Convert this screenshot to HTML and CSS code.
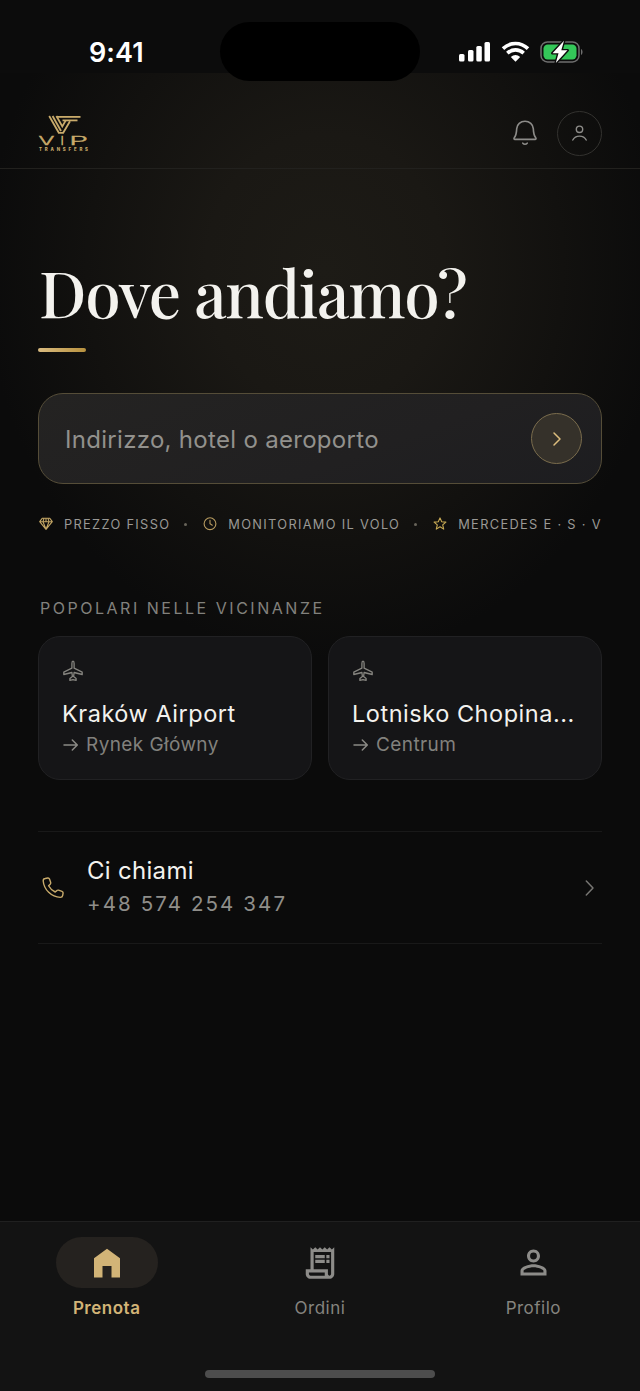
FILE: index.html
```html
<!DOCTYPE html>
<html lang="it">
<head>
<meta charset="utf-8">
<title>VIP Transfers</title>
<link rel="stylesheet" href="styles.css">
</head>
<body>
<div class="app">
  <div class="statusbar">
    <span class="time">9:41</span>
    <div class="island"></div>
    <svg width="126" height="24" viewBox="0 0 126 24">
      <g fill="#fff">
        <rect x="1" y="14" width="5.5" height="7.5" rx="1.5"/>
        <rect x="10" y="10" width="5.5" height="11.5" rx="1.5"/>
        <rect x="18.3" y="6" width="5.5" height="15.5" rx="1.5"/>
        <rect x="26.5" y="2" width="5.5" height="19.5" rx="1.5"/>
      </g>
      <g fill="none" stroke="#fff" stroke-width="3.6">
        <path d="M45 8.6C52.3 1.7 62.7 1.7 70 8.6"/>
        <path d="M49.3 13.2C54.2 8.8 60.8 8.8 65.7 13.2"/>
      </g>
      <path d="M52.8 17C55.8 14.3 59.2 14.3 62.2 17L57.5 21.8Z" fill="#fff"/>
      <rect x="83" y="1.9" width="38" height="20" rx="6.5" fill="none" stroke="#6e6e6e" stroke-width="1.5"/>
      <rect x="85.5" y="4.4" width="33" height="15" rx="4.2" fill="#34c759"/>
      <path d="M123 9v6c2-.7 2-5.3 0-6z" fill="#6e6e6e"/>
      <path d="M106 .8L94.5 13.2h6L97.8 23 109.5 10.3h-6.2z" fill="#fff" stroke="#0c0c0c" stroke-width="2.8" paint-order="stroke" stroke-linejoin="round"/>
    </svg>
  </div>

  <header class="header">
    <svg class="logo" width="52" height="40" viewBox="0 0 52 40">
      <g fill="none" stroke="#c9ab6b" stroke-width="1.8">
        <path d="M11.2 4L20.8 20.8H25.2L32 9.2"/>
        <path d="M14.6 4L23 19"/>
        <path d="M18.4 4L24.3 14.5L27.8 8.4"/>
        <path d="M18.9 4.9H42.5"/>
        <path d="M24.5 8.4H39.5"/>
      </g>
      <g class="wordmark" font-size="11">
        <text transform="translate(.5 33.2) scale(2.15 1)">V</text>
        <text transform="translate(22.8 33.2)">I</text>
        <text transform="translate(31.2 33.2) scale(2.7 1)">P</text>
      </g>
      <text class="wordmark-sub" x="1" y="38.9" font-size="4.4" textLength="49">TRANSFERS</text>
    </svg>
    <div class="header-actions">
      <svg width="26" height="28" viewBox="0 0 26 28" fill="none" stroke="#8d8c89" stroke-width="1.6" stroke-linecap="round" stroke-linejoin="round">
        <path d="M13 2.2C8.4 2.2 5 5.4 4.7 9.6C4.5 15 3.7 17 2.2 18.8C1.7 19.6 2 20.4 3 20.4H23C24 20.4 24.3 19.6 23.8 18.8C22.3 17 21.5 15 21.3 9.6C21 5.4 17.6 2.2 13 2.2Z"/>
        <path d="M10.8 24.2C12 25.6 14 25.6 15.2 24.2"/>
      </svg>
      <div class="avatar">
        <svg width="18" height="18" viewBox="0 0 18 18" fill="none" stroke="#8d8c89" stroke-width="1.4" stroke-linecap="round">
          <circle cx="8.5" cy="5.3" r="3.2"/><path d="M1.8 16C4.3 10.8 12.7 10.8 15.2 16"/>
        </svg>
      </div>
    </div>
  </header>

  <main class="content">
    <h1 class="title">Dove andiamo?</h1>
    <div class="rule"></div>

    <div class="search">
      <span class="placeholder">Indirizzo, hotel o aeroporto</span>
      <div class="go">
        <svg width="14" height="16" viewBox="0 0 14 16" fill="none" stroke="#dcbd7d" stroke-width="1.5" stroke-linecap="round" stroke-linejoin="round"><path d="M4 2l6 6-6 6"/></svg>
      </div>
    </div>

    <div class="perks">
      <svg width="14" height="14" viewBox="0 0 14 14" fill="none" stroke="#c2a564" stroke-width="1.1" stroke-linejoin="round"><path d="M3.2 1.3h7.6l2.5 3.4L7 12.3.7 4.7zM.7 4.7h12.6M5 1.3L4 4.7l3 7.6 3-7.6-1-3.4M7 1.3v3.4"/></svg>
      <span class="perk">PREZZO FISSO</span>
      <i class="dot"></i>
      <svg width="14" height="14" viewBox="0 0 14 14" fill="none" stroke="#b89c60" stroke-width="1.1" stroke-linecap="round"><circle cx="7" cy="6.7" r="5.9"/><path d="M7 3.2V6.7l2.3 1.5"/></svg>
      <span class="perk">MONITORIAMO IL VOLO</span>
      <i class="dot"></i>
      <svg width="14" height="14" viewBox="0 0 14 14" fill="none" stroke="#c9ab55" stroke-width="1.1" stroke-linejoin="round"><path d="M7 .9l1.7 3.9 4.2.3-3.2 2.8 1 4.2L7 9.8l-3.7 2.3 1-4.2L1.1 5.1l4.2-.3z"/></svg>
      <span class="perk">MERCEDES E · S · V</span>
    </div>

    <h2 class="section-label">POPOLARI NELLE VICINANZE</h2>
    <div class="cards">
      <div class="card">
        <svg width="22" height="22" viewBox="0 0 22 22" fill="none" stroke="#85847f" stroke-width="1.3" stroke-linejoin="round"><path d="M11 1.2c-.8 0-1.1 1-1.1 2.2V8.2L1.8 12.2v2.3l8.1-2 .5 4-2.5 2v1.9L11 19.6l3.1.8v-1.9l-2.5-2 .5-4 8.1 2v-2.3L12.1 8.2V3.4c0-1.200-.3-2.200-1.100-2.200z"/></svg>
        <div class="card-title">Kraków Airport</div>
        <div class="card-sub"><svg class="arrow" width="18" height="16" viewBox="0 0 18 16"><path d="M2 8h13M10.3 3l5 5-5 5"/></svg><span>Rynek Główny</span></div>
      </div>
      <div class="card">
        <svg width="22" height="22" viewBox="0 0 22 22" fill="none" stroke="#85847f" stroke-width="1.3" stroke-linejoin="round"><path d="M11 1.2c-.8 0-1.1 1-1.1 2.2V8.2L1.8 12.2v2.3l8.1-2 .5 4-2.5 2v1.9L11 19.6l3.1.8v-1.9l-2.5-2 .5-4 8.1 2v-2.3L12.1 8.2V3.4c0-1.200-.3-2.200-1.100-2.200z"/></svg>
        <div class="card-title">Lotnisko Chopina...</div>
        <div class="card-sub"><svg class="arrow" width="18" height="16" viewBox="0 0 18 16"><path d="M2 8h13M10.3 3l5 5-5 5"/></svg><span>Centrum</span></div>
      </div>
    </div>

    <div class="call">
      <svg width="24" height="24" viewBox="0 0 24 24" fill="none" stroke="#c9ab6b" stroke-width="1.4" stroke-linejoin="round"><path d="M4.2 2.5L6.8 2C7.7 1.9 8.2 2.3 8.5 3.1L9.7 6.5C9.9 7.2 9.7 7.7 9.2 8.2L7.6 9.8C9 12.5 11.3 14.6 14.2 16L15.8 14.6C16.3 14.1 16.9 14 17.5 14.2L21 15.3C21.8 15.6 22.2 16.2 22.1 17L21.7 19.4C21.5 20.6 20.6 21.4 19.4 21.4C10.3 20.9 3 13.8 2.2 5C2.1 3.7 2.9 2.7 4.2 2.5Z"/></svg>
      <div class="call-text">
        <div class="call-title">Ci chiami</div>
        <div class="call-number">+48 574 254 347</div>
      </div>
      <svg width="12" height="18" viewBox="0 0 12 18" fill="none" stroke="#777673" stroke-width="1.5" stroke-linecap="round" stroke-linejoin="round"><path d="M2.3 2l6.700 7-6.700 7"/></svg>
    </div>
  </main>

  <nav class="tabs">
    <div class="tab tab-active">
      <div class="tab-icon"><svg width="40" height="40" viewBox="0 0 24 24" fill="#d2b477"><path d="M4.2 20.7V9.2L12 3.4l7.8 5.8v11.5h-5.1v-6.9H9.3v6.9z"/></svg></div>
      <span class="tab-label">Prenota</span>
    </div>
    <div class="tab">
      <div class="tab-icon"><svg width="38" height="38" viewBox="0 0 24 24" fill="#8d8c89"><path d="M19.5 3.5 18 2l-1.500 1.500L15 2l-1.500 1.500L12 2l-1.500 1.500L9 2 7.500 3.500 6 2v14H3v3c0 1.660 1.340 3 3 3h12c1.660 0 3-1.340 3-3V2zM15 20H6c-.55 0-1-.45-1-1v-1h10zm4-1c0 .55-.45 1-1 1s-1-.45-1-1v-3H8V5h11zM9 7h6v2H9zM16 7h2v2h-2zM9 10h6v2H9zM16 10h2v2h-2z"/></svg></div>
      <span class="tab-label">Ordini</span>
    </div>
    <div class="tab">
      <div class="tab-icon"><svg width="39" height="39" viewBox="0 0 24 24" fill="#8d8c89"><path d="M12 5.9a2.100 2.100 0 110 4.200 2.100 2.100 0 010-4.200m0 9c2.970 0 6.100 1.460 6.100 2.100v1.100H5.900V17c0-.64 3.130-2.100 6.100-2.100M12 4C9.790 4 8 5.790 8 8s1.790 4 4 4 4-1.790 4-4-1.790-4-4-4zm0 9c-2.670 0-8 1.340-8 4v3h16v-3c0-2.660-5.330-4-8-4z"/></svg></div>
      <span class="tab-label">Profilo</span>
    </div>
    <div class="home-indicator"></div>
  </nav>
</div>
</body>
</html>
```
FILE: styles.css
```css
* { box-sizing: border-box; margin: 0; padding: 0; }
body { background: #0b0b0b; font-family: Inter, "Noto Sans", sans-serif; color: #f3f2ee; }
svg { display: block; flex: none; }
.app {
  width: 640px; height: 1391px; display: flex; flex-direction: column; overflow: hidden;
  background: radial-gradient(ellipse 340px 390px at 325px 270px, #1d1b16 0%, #1a1814 35%, #12110f 70%, #0b0b0b 100%) #0b0b0b;
}
.statusbar { height: 73px; flex: none; background: #0c0c0c; position: relative; padding: 31px 56px 0 89px; display: flex; justify-content: space-between; align-items: center; }
.time { font-size: 27px; font-weight: 600; line-height: 42px; letter-spacing: 0.1px; color: #fff; padding-top: 1px; }
.island { position: absolute; left: 220px; top: 22px; width: 200px; height: 59px; border-radius: 30px; background: #000; }
.header { height: 96px; flex: none; border-bottom: 1px solid #22211e; padding: 25px 38px 0; display: flex; align-items: center; justify-content: space-between; }
.logo { margin-bottom: 3px; }
.wordmark text { font-family: Inter, sans-serif; font-weight: 300; fill: #c9ab6b; stroke: #c9ab6b; stroke-width: 0.6px; vector-effect: non-scaling-stroke; }
.wordmark-sub { font-family: Inter, sans-serif; font-weight: 800; fill: #c9ab6b; }
.header-actions { display: flex; align-items: center; gap: 19px; }
.avatar { width: 45px; height: 45px; border: 1px solid #33322f; border-radius: 50%; display: flex; align-items: center; justify-content: center; }
.content { flex: 1; padding: 85px 38px 0; display: flex; flex-direction: column; }
.title { font-family: "Playfair Display", "Liberation Serif", serif; font-size: 64px; line-height: 76px; font-weight: 500; letter-spacing: -1.2px; padding-left: 1px; white-space: nowrap; }
.rule { width: 48px; height: 4px; margin-top: 18px; border-radius: 2px; background: linear-gradient(90deg, #d9bb80, #b8923f); }
.search { height: 91px; margin-top: 41px; flex: none; border: 1px solid #554d38; border-radius: 25px; background: linear-gradient(160deg, #242322, #212021 60%, #1d1d20); display: flex; align-items: center; justify-content: space-between; padding: 0 19px 0 26px; }
.placeholder { font-size: 24px; color: #92918d; letter-spacing: 0.3px; padding-top: 2px; }
.go { width: 51px; height: 51px; border-radius: 50%; border: 1px solid #7b6d4d; background: #35312a; display: flex; align-items: center; justify-content: center; }
.perks { display: flex; align-items: center; height: 20px; margin-top: 30px; padding-left: 1px; white-space: nowrap; }
.perk { font-size: 12.8px; line-height: 20px; letter-spacing: 1.33px; color: #9a9995; margin-left: 11px; padding-top: 1px; }
.dot { flex: none; width: 3px; height: 3px; border-radius: 50%; background: #68645a; margin: 0 16px 0 14px; }
.section-label { font-size: 16px; font-weight: 400; line-height: 20px; letter-spacing: 2.52px; color: #82817d; margin-top: 64px; padding-left: 2px; }
.cards { display: grid; grid-template-columns: 1fr 1fr; gap: 16px; margin-top: 18px; }
.card { height: 144px; border: 1px solid #212123; border-radius: 22px; background: #151517; padding: 23px 22px 0 23px; }
.card-title { font-size: 23.5px; line-height: 30px; margin-top: 17px; letter-spacing: 0.53px; white-space: nowrap; }
.card-sub { display: flex; align-items: center; gap: 6px; font-size: 19px; line-height: 26px; margin-top: 3px; letter-spacing: 0.4px; color: #82817d; }
.arrow { fill: none; stroke: #8b8a86; stroke-width: 1.5; stroke-linecap: round; stroke-linejoin: round; }
.call { height: 113px; margin-top: 51px; border-top: 1px solid #191919; border-bottom: 1px solid #191919; display: flex; align-items: center; padding: 1px 6px 0 3px; }
.call-text { margin-left: 22px; flex: 1; }
.call-title { font-size: 24px; line-height: 32px; letter-spacing: 0.3px; }
.call-number { font-size: 20.5px; line-height: 34px; letter-spacing: 2.1px; color: #8f8e8a; }
.tabs { height: 170px; flex: none; background: #131313; border-top: 1px solid #202020; display: grid; grid-template-columns: repeat(3, 1fr); align-items: start; padding-top: 15px; position: relative; }
.tab { display: flex; flex-direction: column; align-items: center; color: #85847f; }
.tab-icon { width: 102px; height: 51px; border-radius: 26px; display: flex; align-items: center; justify-content: center; }
.tab-active { color: #d2b477; }
.tab-active .tab-icon { background: #25221f; }
.tab-label { font-size: 17px; line-height: 24px; margin-top: 8px; letter-spacing: 0.5px; }
.tab-active .tab-label { font-weight: 600; }
.home-indicator { position: absolute; left: 205px; top: 148px; width: 230px; height: 8px; border-radius: 4px; background: #4d4d4d; }
```
